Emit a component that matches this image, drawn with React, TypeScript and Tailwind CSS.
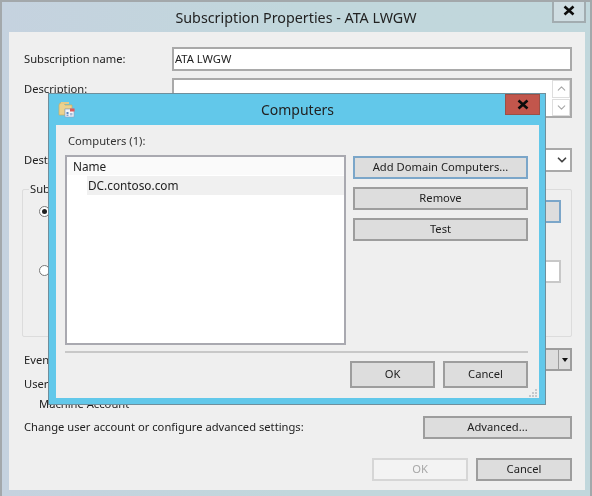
import { ChevronDown, ChevronUp } from "lucide-react";

function CloseGlyph() {
  return (
    <svg width="14" height="11" viewBox="0 0 14 11" aria-hidden>
      <path d="M2.5 1.5 L11.5 9.5 M11.5 1.5 L2.5 9.5" stroke="#0c0c0c" strokeWidth="2.6" />
    </svg>
  );
}

function FolderIcon() {
  return (
    <svg width="17" height="17" viewBox="0 0 17 17" aria-hidden>
      <path d="M1 4 V14 H7 V8 H14 V4 H7 L6 2 H2 Z" fill="#ecd28e" stroke="#c9ad64" strokeWidth="0.7" />
      <rect x="3" y="1" width="8" height="2" fill="#e6cb88" />
      <rect x="7" y="8" width="9" height="8" fill="#f2f5fa" stroke="#8ea4c4" strokeWidth="0.7" />
      <rect x="12" y="7.5" width="4.5" height="3" fill="#dd5b5b" />
      <rect x="8.5" y="11" width="2" height="2" fill="#5c86c0" />
      <rect x="8.5" y="13.5" width="2" height="1.5" fill="#7fa0cf" />
      <rect x="12" y="12" width="2.5" height="2.5" fill="#a8bcd8" />
    </svg>
  );
}

function Btn({ label, className }: { label: string; className: string }) {
  return (
    <button
      type="button"
      className={`flex items-center justify-center border-2 bg-[#dddddd] text-[11.2px] text-[#222] ${className}`}
    >
      {label}
    </button>
  );
}

function Computers() {
  return (
    <div className="absolute left-[46px] top-[91px] flex h-[312px] w-[498px] flex-col border border-[#6f8f9c] bg-[#62c8ea] pb-[6px] pl-[7px] pr-[6px]">
      <div className="relative flex h-[31px] shrink-0 items-center justify-center">
        <span className="absolute left-[2px] top-[7px]">
          <FolderIcon />
        </span>
        <span className="text-[14px] text-[#222]">Computers</span>
        <span className="absolute right-[-1px] top-0 flex h-[21px] w-[35px] items-center justify-center border border-[#9a5047] bg-[#c2564c]">
          <CloseGlyph />
        </span>
      </div>
      <div className="relative flex-1 bg-[#efefef] px-[9px]">
        <div className="pl-[3px] pt-[7px] text-[11.2px] leading-[18px] text-[#333]">Computers (1):</div>
        <div className="mt-[5px] flex gap-[7px]">
          <div className="h-[190px] w-[281px] border-2 border-[#a9a9b0] bg-white">
            <div className="h-[18px] bg-[#fafafa] pl-[6px] text-[11.8px] leading-[18px] text-[#222]">Name</div>
            <div className="ml-[20px] mt-[1px] h-[19px] bg-[#f0f0f0] pl-[1px] text-[11.8px] leading-[19px] text-[#222]">
              DC.contoso.com
            </div>
          </div>
          <div className="flex w-[175px] flex-col gap-[8px] pt-[1px]">
            <Btn label="Add Domain Computers..." className="h-[23px] border-[#7ba6c9]" />
            <Btn label="Remove" className="h-[23px] border-[#9d9d9d]" />
            <Btn label="Test" className="h-[23px] border-[#9d9d9d]" />
          </div>
        </div>
        <div className="mt-[6px] h-[2px] w-[463px] bg-[#c8c8c8]" />
        <div className="mt-[8px] flex w-[463px] justify-end gap-[8px]">
          <Btn label="OK" className="h-[27px] w-[85px] border-[#9d9d9d]" />
          <Btn label="Cancel" className="h-[27px] w-[85px] border-[#9d9d9d]" />
        </div>
        <svg className="absolute bottom-[1px] right-[1px]" width="9" height="9" viewBox="0 0 9 9" aria-hidden>
          <path d="M6 1h2v2H6zM3 4h2v2H3zM6 4h2v2H6zM0 7h2v2H0zM3 7h2v2H3zM6 7h2v2H6z" fill="#c4c8cc" />
        </svg>
      </div>
    </div>
  );
}

export default function App() {
  return (
    <div className="relative h-[496px] w-[592px] overflow-hidden border-x-2 border-t-2 border-[#a3a8ab] bg-gradient-to-r from-[#c5d2df] via-[#c1d7dc] to-[#c1d7dc] font-['Noto_Sans',sans-serif] blur-[0.4px]">
      <div className="flex h-[30px] items-center justify-center pt-[2px]">
        <span className="text-[14.3px] text-[#222]">Subscription Properties - ATA LWGW</span>
      </div>
      <span className="absolute right-[4px] top-[-2px] flex h-[23px] w-[34px] items-center justify-center border-2 border-t-0 border-[#a2acb0] bg-[#cfdde2]">
        <CloseGlyph />
      </span>
      <div className="ml-[7px] h-[458px] w-[576px] bg-[#efefef] pl-[15px] pr-[13px] text-[11.2px] text-[#222]">
        <div className="flex h-[46px] pt-[15px]">
          <span className="w-[148px] pt-[2px] leading-[20px]">Subscription name:</span>
          <div className="h-[24px] flex-1 border-2 border-[#a9a9a9] bg-white pl-[1px] leading-[20px]">ATA LWGW</div>
        </div>
        <div className="flex h-[70px]">
          <span className="w-[148px] pt-[1px] leading-[20px]">Description:</span>
          <div className="flex h-[40px] flex-1 justify-end border-2 border-[#a9a9a9] bg-white">
            <div className="flex w-[18px] flex-col gap-[1px]">
              <span className="flex h-[18px] items-center justify-center border border-[#dedede] text-[#a8a8a8]">
                <ChevronUp size={13} />
              </span>
              <span className="flex h-[18px] items-center justify-center border border-[#dedede] text-[#a8a8a8]">
                <ChevronDown size={13} />
              </span>
            </div>
          </div>
        </div>
        <div className="flex h-[41px]">
          <span className="w-[148px] pt-[2px] leading-[20px]">Destination log:</span>
          <div className="flex h-[24px] flex-1 items-center justify-end border-2 border-[#a9a9a9] bg-white pr-[1px]">
            <ChevronDown size={14} strokeWidth={3} className="text-[#444]" />
          </div>
        </div>
        <div className="relative -ml-[2px] h-[148px] w-[550px] rounded-[2px] border border-[#dcdcdc]">
          <span className="absolute left-[6px] top-[-10px] bg-[#efefef] px-[1px] leading-[18px]">Subscription type</span>
          <span className="absolute left-[16px] top-[16px] h-[11px] w-[11px] rounded-full border border-[#777] bg-white p-[2px]">
            <span className="block h-full w-full rounded-full bg-[#222]" />
          </span>
          <span className="absolute right-[10px] top-[10px] h-[23px] w-[150px] border-2 border-[#7ba6c9] bg-[#dddddd]" />
          <span className="absolute left-[16px] top-[75px] h-[11px] w-[11px] rounded-full border border-[#777] bg-white" />
          <span className="absolute right-[10px] top-[70px] h-[23px] w-[150px] border-2 border-[#c8c8c8] bg-white" />
        </div>
        <div className="mt-[11px] flex h-[23px]">
          <span className="w-[148px] pt-[2px] leading-[20px]">Events to collect:</span>
          <div className="flex flex-1 justify-end border-2 border-[#9d9d9d] bg-[#dddddd]">
            <span className="flex w-[12px] items-center justify-center border-l border-[#9d9d9d]">
              <svg width="6" height="4" viewBox="0 0 6 4" aria-hidden>
                <path d="M0 0h6L3 4z" fill="#111" />
              </svg>
            </span>
          </div>
        </div>
        <div className="mt-[3px] leading-[20px]">User account:</div>
        <div className="ml-[15px] leading-[20px]">Machine Account</div>
        <div className="mt-[2px] flex h-[23px] items-center justify-between">
          <span>Change user account or configure advanced settings:</span>
          <Btn label="Advanced..." className="h-[23px] w-[149px] border-[#9d9d9d]" />
        </div>
        <div className="mt-[19px] flex justify-end gap-[8px]">
          <button
            type="button"
            className="flex h-[23px] w-[96px] items-center justify-center border-2 border-[#d6d6d6] bg-[#f3f3f3] text-[11.2px] text-[#a8a8a8]"
          >
            OK
          </button>
          <Btn label="Cancel" className="h-[23px] w-[96px] border-[#9d9d9d]" />
        </div>
      </div>
      <Computers />
    </div>
  );
}
